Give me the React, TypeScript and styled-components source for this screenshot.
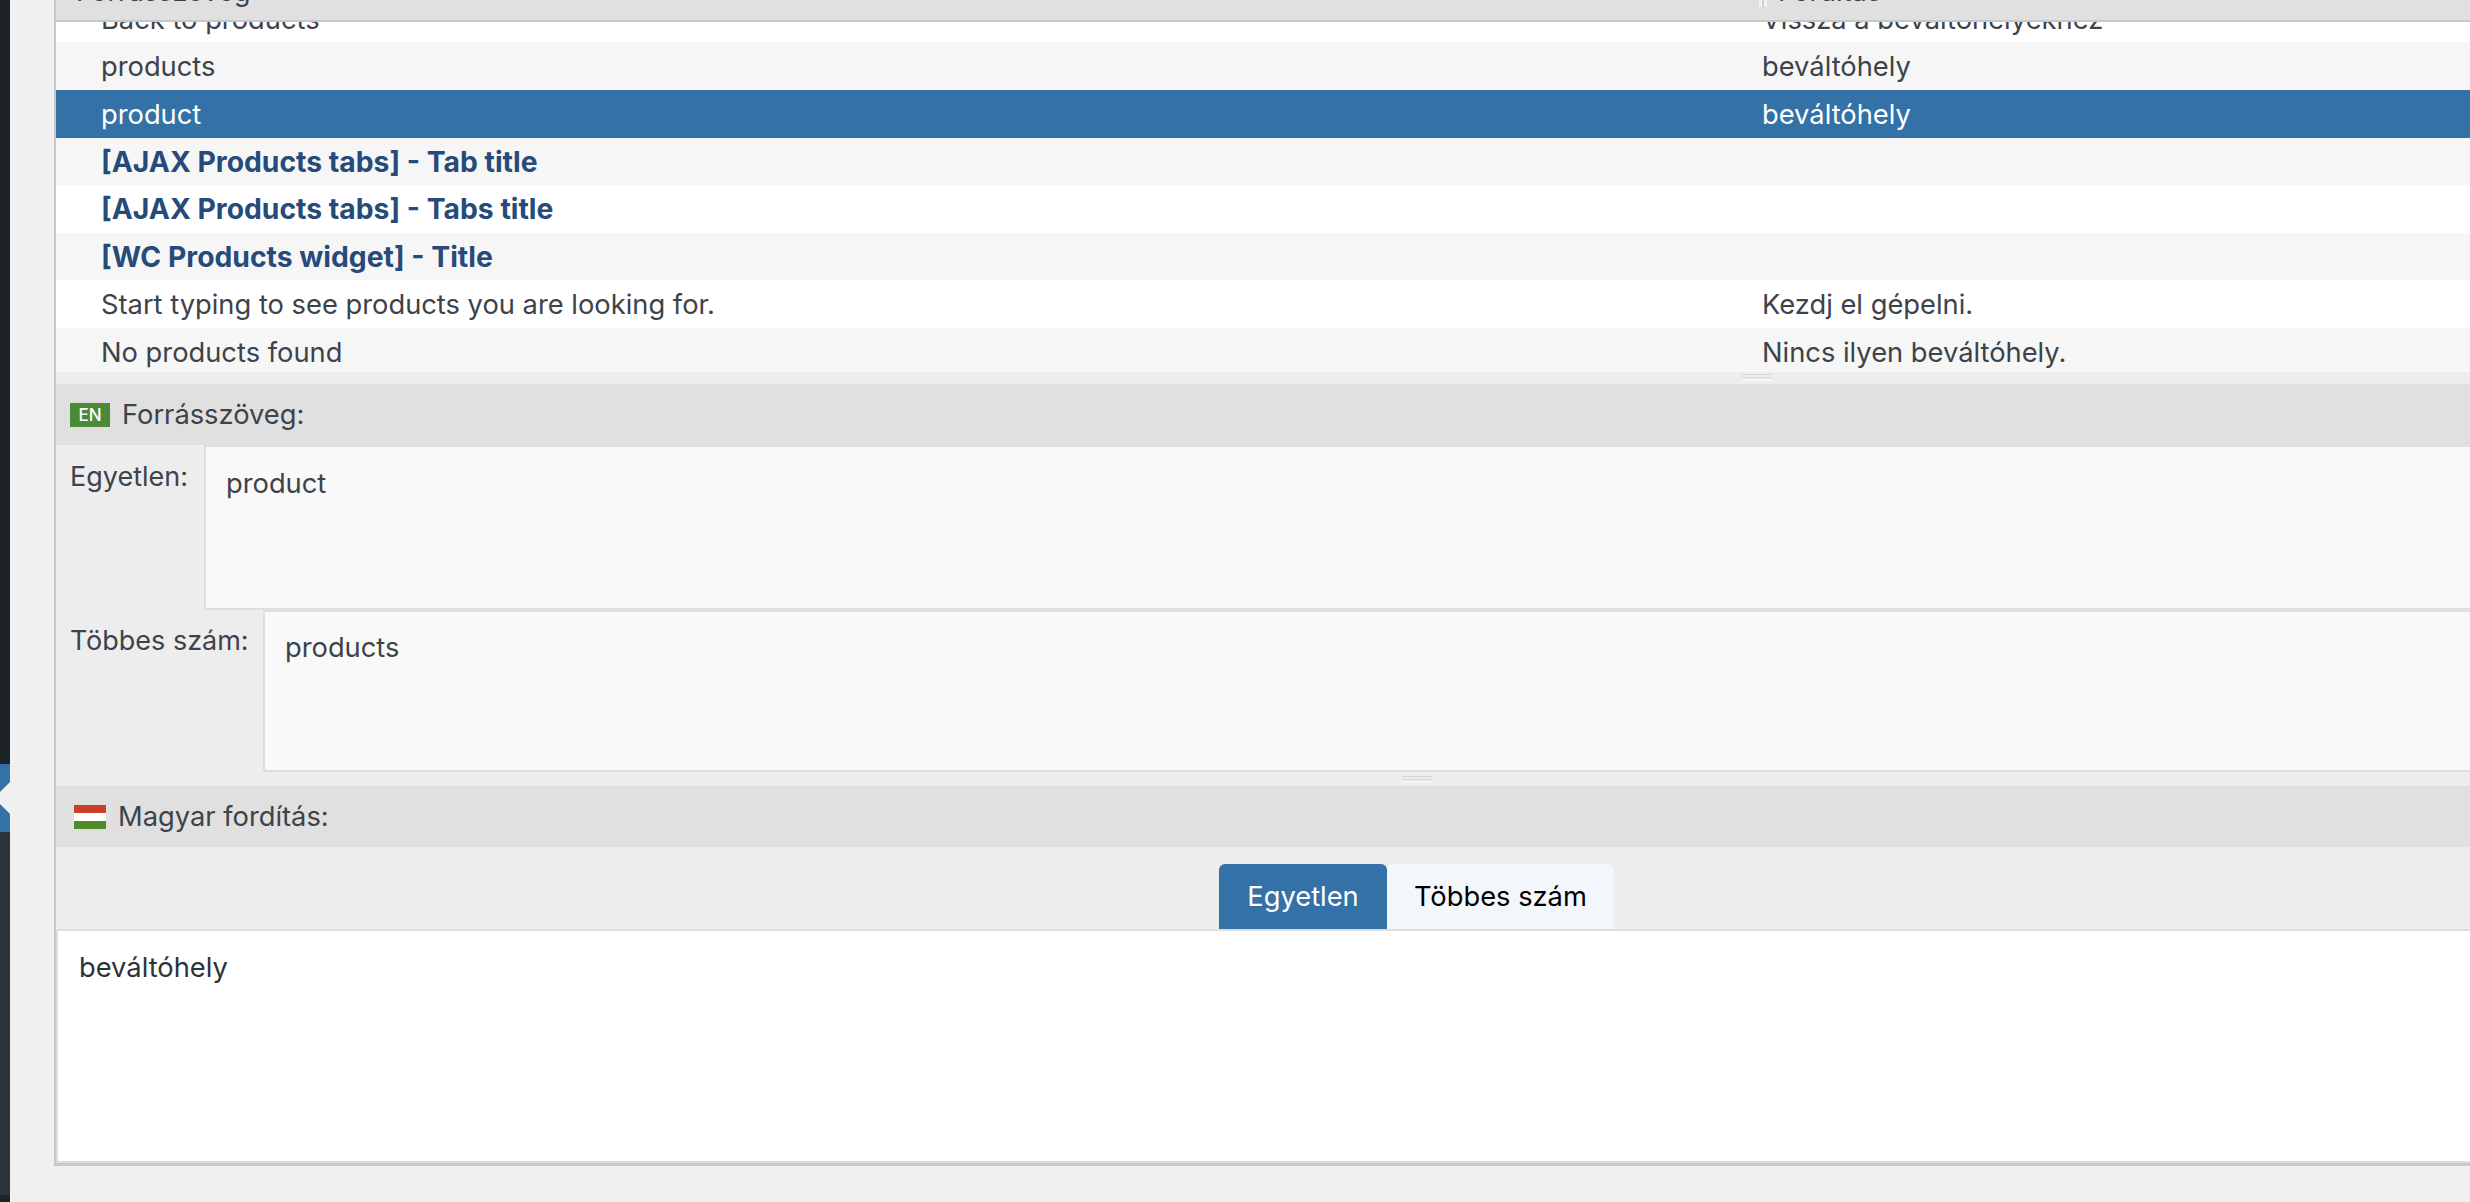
import styled, { createGlobalStyle } from "styled-components";

const GlobalStyle = createGlobalStyle`
  * {
    box-sizing: border-box;
  }
  html, body {
    margin: 0;
    padding: 0;
    height: 100%;
    overflow: hidden;
    background: #f0f0f0;
  }
  body {
    font-family: Inter, "Liberation Sans", sans-serif;
    font-size: 27.3px;
    color: #3c434a;
  }
`;

const Page = styled.div`
  width: 2470px;
  height: 1202px;
  display: flex;
  overflow: hidden;
`;

const Sidebar = styled.div`
  width: 10px;
  display: flex;
  flex-direction: column;
  flex-shrink: 0;
`;

const SidebarBand = styled.div<{ $height: number; $color: string }>`
  position: relative;
  height: ${(p) => p.$height}px;
  background: ${(p) => p.$color};
`;

const MenuArrow = styled.span`
  position: absolute;
  right: 0;
  top: 18px;
  width: 0;
  height: 0;
  border-top: 16px solid transparent;
  border-bottom: 16px solid transparent;
  border-right: 16px solid #f0f0f0;
`;

const Content = styled.div`
  flex: 1;
  padding-left: 44px;
  height: 1166px;
`;

const Editor = styled.div`
  height: 100%;
  display: flex;
  flex-direction: column;
  border-left: 2px solid #c8c8c8;
  border-bottom: 3px solid #c8c8c8;
  background: #ededed;
`;

const TableHead = styled.div`
  height: 22px;
  flex-shrink: 0;
  display: grid;
  grid-template-columns: 1703px 1fr;
  background: #e0e0e0;
  border-bottom: 2px solid #c8c8c8;
  overflow: hidden;
`;

const HeadCell = styled.div<{ $indent: number }>`
  position: relative;
  height: 20px;
  display: flex;
  align-items: flex-end;
  padding: 0 0 13px ${(p) => p.$indent}px;
  line-height: 30px;
  white-space: nowrap;
`;

const ColumnTick = styled.span`
  position: absolute;
  left: 0;
  top: 0;
  width: 8px;
  height: 7px;
  background: linear-gradient(90deg, #f2f2f2 0 3px, #d2d2d2 3px 5px, #f2f2f2 5px 8px);
`;

const RowList = styled.div`
  height: 350px;
  flex-shrink: 0;
  overflow: hidden;
`;

const Row = styled.div<{ $tone: "white" | "gray" | "selected"; $height: number }>`
  height: ${(p) => p.$height}px;
  display: grid;
  grid-template-columns: 1706px 1fr;
  align-items: center;
  overflow: hidden;
  background: ${(p) =>
    p.$tone === "selected" ? "#3371a6" : p.$tone === "gray" ? "#f6f6f6" : "#ffffff"};
  color: ${(p) => (p.$tone === "selected" ? "#ffffff" : "#3c434a")};
`;

const ClippedRow = styled(Row)`
  align-items: end;
`;

const Cell = styled.div<{ $bold?: boolean; $target?: boolean }>`
  padding-left: ${(p) => (p.$target ? "0" : "45px")};
  white-space: nowrap;
  ${(p) => (p.$bold ? "font-weight: 700; font-size: 28.3px; color: #264b7a;" : "")}
`;

const ClippedCell = styled(Cell)`
  height: 20px;
  display: flex;
  align-items: flex-end;
  padding-bottom: 7px;
  line-height: 30px;
`;

const Gutter = styled.div<{ $height: number; $gripX: number; $gripY: number }>`
  height: ${(p) => p.$height}px;
  flex-shrink: 0;
  padding: ${(p) => p.$gripY}px 0 0 ${(p) => p.$gripX}px;
`;

const Grip = styled.div`
  width: 30px;
  height: 7px;
  background: linear-gradient(
    #d6d6d6 0 1px,
    transparent 1px 3px,
    #d6d6d6 3px 4px,
    transparent 4px 6px,
    #fbfbfb 6px 7px
  );
`;

const SectionHead = styled.div<{ $indent: number }>`
  height: 61px;
  flex-shrink: 0;
  display: flex;
  align-items: center;
  gap: 12px;
  padding-left: ${(p) => p.$indent}px;
  background: #e0e0e0;
`;

const Badge = styled.span`
  width: 40px;
  height: 24px;
  background: #4c8a3a;
  color: #ffffff;
  font-size: 17px;
  font-weight: 500;
  display: flex;
  align-items: center;
  justify-content: center;
`;

const Flag = styled.svg`
  width: 32px;
  height: 24px;
  display: block;
`;

const SourceRow = styled.div<{ $height: number }>`
  height: ${(p) => p.$height}px;
  flex-shrink: 0;
  display: flex;
`;

const SourceLabel = styled.div<{ $width: number; $top: number }>`
  width: ${(p) => p.$width}px;
  flex-shrink: 0;
  padding: ${(p) => p.$top}px 0 0 14px;
  font-size: 27px;
  line-height: 32px;
  white-space: nowrap;
`;

const SourceBox = styled.div<{ $top: number }>`
  flex: 1;
  background: #f9f9f9;
  border-left: 2px solid #dedede;
  border-bottom: 2px solid #dedede;
  border-top: 2px solid #e0e0e0;
  padding: ${(p) => p.$top}px 20px 0;
  line-height: 32px;
`;

const TabsBar = styled.div`
  height: 82px;
  flex-shrink: 0;
  display: flex;
  justify-content: flex-end;
  align-items: flex-end;
  padding-right: 856px;
`;

const Tab = styled.div<{ $active?: boolean; $width: number }>`
  width: ${(p) => p.$width}px;
  height: 65px;
  display: flex;
  align-items: center;
  justify-content: center;
  border-radius: 6px 6px 0 0;
  background: ${(p) => (p.$active ? "#3371a6" : "#f3f6fb")};
  color: ${(p) => (p.$active ? "#ffffff" : "#000000")};
`;

const Translation = styled.div`
  flex: 1;
  background: #ffffff;
  border-left: 2px solid #dedede;
  border-top: 2px solid #dedede;
  border-bottom: 2px solid #dedede;
  padding: 21px 21px 0;
  line-height: 32px;
  color: #2c3338;
`;

const rows = [
  { source: "products", target: "beváltóhely", tone: "gray", height: 48 },
  { source: "product", target: "beváltóhely", tone: "selected", height: 48 },
  { source: "[AJAX Products tabs] - Tab title", tone: "gray", height: 47, bold: true },
  { source: "[AJAX Products tabs] - Tabs title", tone: "white", height: 48, bold: true },
  { source: "[WC Products widget] - Title", tone: "gray", height: 47, bold: true },
  { source: "Start typing to see products you are looking for.", target: "Kezdj el gépelni.", tone: "white", height: 48 },
  { source: "No products found", target: "Nincs ilyen beváltóhely.", tone: "gray", height: 48 },
] as const;

const App = (): JSX.Element => {
  return (
    <>
      <GlobalStyle />
      <Page>
        <Sidebar>
          <SidebarBand $height={764} $color="#1d2327" />
          <SidebarBand $height={68} $color="#3371a6">
            <MenuArrow />
          </SidebarBand>
          <SidebarBand $height={363} $color="#2c3338" />
          <SidebarBand $height={7} $color="#1d2327" />
        </Sidebar>
        <Content>
          <Editor>
            <TableHead>
              <HeadCell $indent={20}>Forrásszöveg</HeadCell>
              <HeadCell $indent={19}>
                <ColumnTick />
                Fordítás
              </HeadCell>
            </TableHead>
            <RowList>
              <ClippedRow $tone="white" $height={20}>
                <ClippedCell>Back to products</ClippedCell>
                <ClippedCell $target>Vissza a beváltóhelyekhez</ClippedCell>
              </ClippedRow>
              {rows.map((row) => (
                <Row key={row.source} $tone={row.tone} $height={row.height}>
                  <Cell $bold={"bold" in row}>{row.source}</Cell>
                  <Cell $target>{"target" in row ? row.target : ""}</Cell>
                </Row>
              ))}
            </RowList>
            <Gutter $height={12} $gripX={1686} $gripY={2}>
              <Grip />
            </Gutter>
            <SectionHead $indent={14}>
              <Badge>EN</Badge>
              Forrásszöveg:
            </SectionHead>
            <SourceRow $height={165}>
              <SourceLabel $width={148} $top={16}>Egyetlen:</SourceLabel>
              <SourceBox $top={21}>product</SourceBox>
            </SourceRow>
            <SourceRow $height={162}>
              <SourceLabel $width={207} $top={15}>Többes szám:</SourceLabel>
              <SourceBox $top={20}>products</SourceBox>
            </SourceRow>
            <Gutter $height={14} $gripX={1346} $gripY={4}>
              <Grip />
            </Gutter>
            <SectionHead $indent={18}>
              <Flag viewBox="0 0 32 24">
                <rect width="32" height="8" fill="#c9402a" />
                <rect y="8" width="32" height="8" fill="#ffffff" />
                <rect y="16" width="32" height="8" fill="#4f8a2b" />
              </Flag>
              Magyar fordítás:
            </SectionHead>
            <TabsBar>
              <Tab $active $width={168}>Egyetlen</Tab>
              <Tab $width={227}>Többes szám</Tab>
            </TabsBar>
            <Translation>beváltóhely</Translation>
          </Editor>
        </Content>
      </Page>
    </>
  );
};

export default App;
